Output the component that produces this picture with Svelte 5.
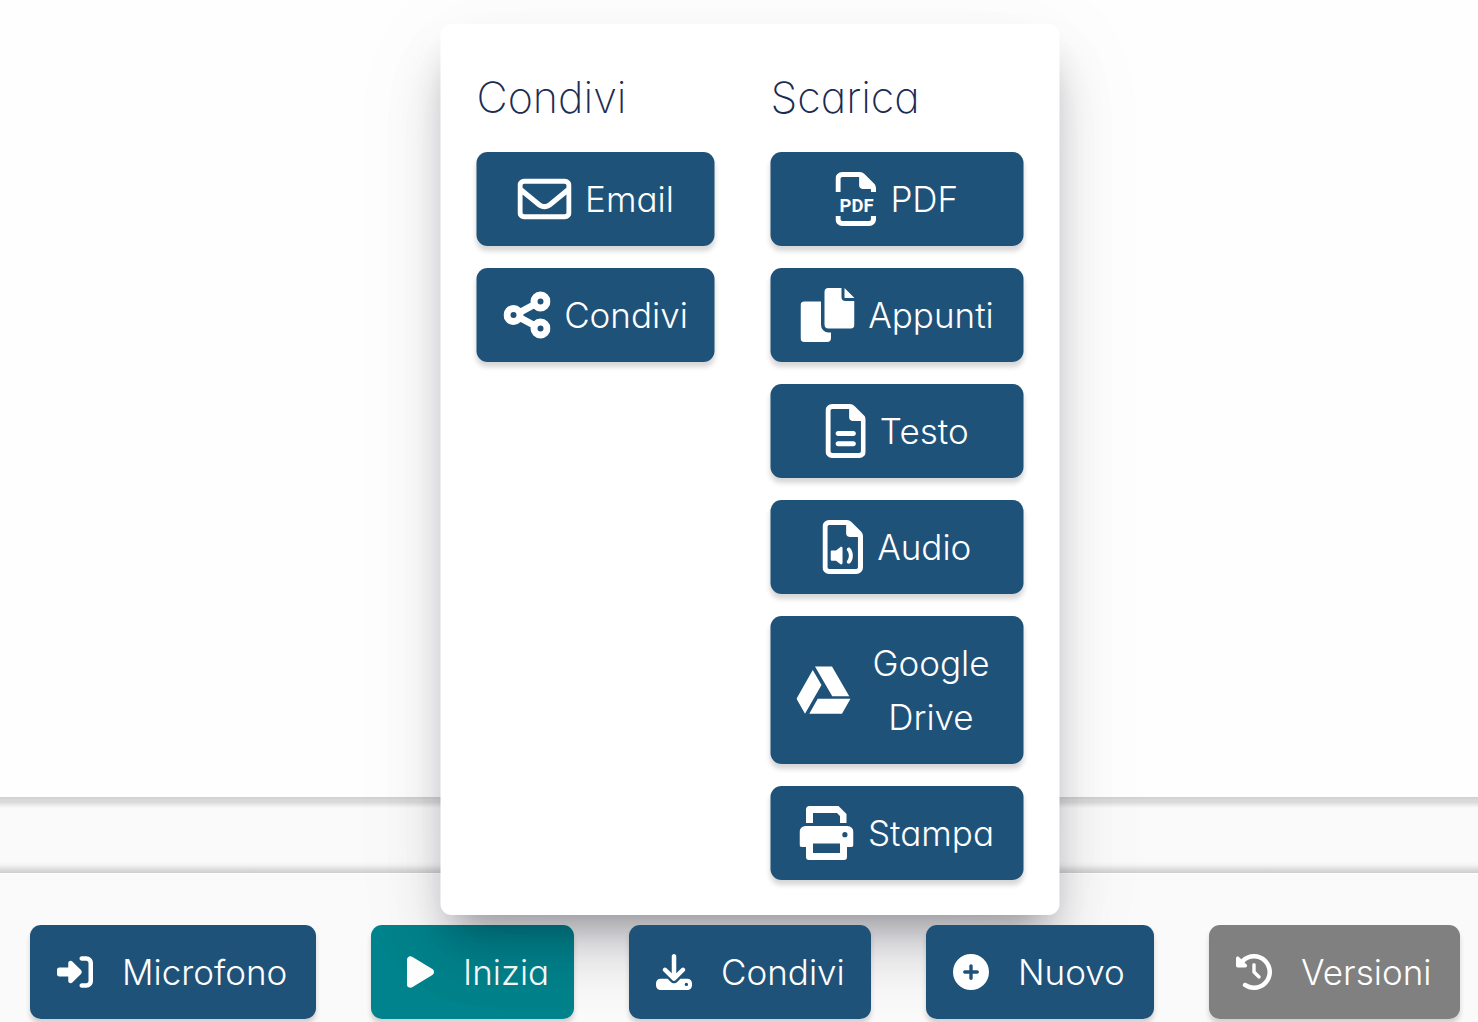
<script>
  const page =
    'M64 464c-8.8 0-16-7.2-16-16V64c0-8.8 7.2-16 16-16H224v80c0 17.7 14.3 32 32 32h80V448c0 8.8-7.2 16-16 16H64zM64 0C28.7 0 0 28.7 0 64V448c0 35.3 28.7 64 64 64H320c35.3 0 64-28.7 64-64V154.5c0-17-6.7-33.3-18.7-45.3L274.7 18.7C262.7 6.7 246.5 0 229.5 0H64z';

  const icons = {
    email: { box: '0 0 512 512', d: 'M64 112c-8.8 0-16 7.2-16 16v22.1L220.5 291.7c20.7 17 50.4 17 71.1 0L464 150.1V128c0-8.8-7.2-16-16-16H64zM48 212.2V384c0 8.8 7.2 16 16 16H448c8.8 0 16-7.2 16-16V212.2L322 328.8c-38.4 31.5-93.7 31.5-132 0L48 212.2zM0 128C0 92.7 28.7 64 64 64H448c35.3 0 64 28.7 64 64V384c0 35.3-28.7 64-64 64H64c-35.3 0-64-28.7-64-64V128z' },
    share: { box: '0 0 47 54', stroke: 'M17 24L30 17M17 30L30 37M16.500 27a6.500 6.500 0 1 1-13 0a6.500 6.500 0 1 1 13 0zM43.500 13.500a6.500 6.500 0 1 1-13 0a6.500 6.500 0 1 1 13 0zM43.500 40.500a6.500 6.500 0 1 1-13 0a6.500 6.500 0 1 1 13 0z' },
    pdf: { box: '0 0 384 512', label: 'PDF', d: 'M64 0C28.700 0 0 28.700 0 64V190H48V64c0-8.800 7.200-16 16-16H224v80c0 17.700 14.300 32 32 32h80v30h48V154.500c0-17-6.700-33.300-18.700-45.300L274.700 18.700C262.700 6.700 246.500 0 229.500 0H64zM0 416v32c0 35.300 28.700 64 64 64H320c35.300 0 64-28.700 64-64v-32h-48v32c0 8.800-7.200 16-16 16H64c-8.800 0-16-7.200-16-16v-32z' },
    copy: { box: '0 0 54 54', d: 'M28 0H41V9a4 4 0 0 0 4 4H54V36.500a4 4 0 0 1-4 4H28a4 4 0 0 1-4-4V4a4 4 0 0 1 4-4zM44 0L54 10H44zM4 13.500H20.500V37a7.500 7.500 0 0 0 7.500 7.500H30.500V50a4 4 0 0 1-4 4H4a4 4 0 0 1-4-4V17.500a4 4 0 0 1 4-4z' },
    text: { box: '0 0 384 512', d: page + 'M120 256c-13.300 0-24 10.700-24 24s10.700 24 24 24H264c13.300 0 24-10.700 24-24s-10.700-24-24-24H120zm0 96c-13.300 0-24 10.700-24 24s10.700 24 24 24H264c13.300 0 24-10.700 24-24s-10.700-24-24-24H120z' },
    audio: { box: '0 0 384 512', d: page + 'M90 290h38l40-32c9-7 22-2 22 10v140c0 12-13 17-22 10l-40-32H90c-7 0-12-5-12-12v-72c0-7 5-12 12-12zM234 268c7-9 19-10 27-3c36 35 36 111 0 146c-8 7-20 6-27-3c-6-8-5-18 1-24c20-22 20-70 0-92c-6-6-7-16-1-24z' },
    drive: { box: '0 0 512 512', d: 'M339 314.9L175.4 32h161.2l163.6 282.9H339zm-137.5 23.6L120.9 480h310.5L512 338.5H201.5zM154.100 67.400L0 338.500 80.600 480 237 208.800 154.100 67.400z' },
    print: { box: '0 0 54 54', d: 'M10 0H39L47 8V17H40.500V10L37.500 7H13.500V17H6.500V3.500A3.500 3.500 0 0 1 10 0zM6 20H48a6 6 0 0 1 6 6V38.500a2.500 2.500 0 0 1-2.500 2.500H47.500V51a3 3 0 0 1-3 3H9.500a3 3 0 0 1-3-3V41H2.500A2.500 2.500 0 0 1 0 38.500V26a6 6 0 0 1 6-6zM13.500 37.500V47H40.500V37.500zM48 28.700a2.600 2.600 0 1 0-5.200 0a2.600 2.600 0 1 0 5.200 0z' },
    enter: { box: '0 0 512 512', d: 'M217.9 105.9L340.7 228.7c7.2 7.2 11.3 17.1 11.3 27.3s-4.1 20.1-11.3 27.3L217.9 406.1c-6.4 6.4-15 9.9-24 9.9c-18.7 0-33.9-15.2-33.9-33.9l0-62.1L32 320c-17.7 0-32-14.3-32-32l0-64c0-17.7 14.3-32 32-32l128 0 0-62.1c0-18.7 15.2-33.9 33.9-33.9c9 0 17.6 3.6 24 9.9zM352 416l64 0c17.7 0 32-14.3 32-32l0-256c0-17.7-14.3-32-32-32l-64 0c-17.7 0-32-14.3-32-32s14.3-32 32-32l64 0c53 0 96 43 96 96l0 256c0 53-43 96-96 96l-64 0c-17.7 0-32-14.3-32-32s14.3-32 32-32z' },
    play: { box: '-128 0 512 512', d: 'M73 39c-14.8-9.1-33.4-9.4-48.5-.9S0 62.6 0 80V432c0 17.4 9.4 33.4 24.5 41.9s33.7 8.1 48.500-.9L361 297c14.300-8.700 23-24.200 23-41s-8.700-32.200-23-41L73 39z' },
    download: { box: '0 0 512 512', d: 'M288 32c0-17.7-14.3-32-32-32s-32 14.3-32 32V274.7l-73.4-73.4c-12.5-12.5-32.8-12.5-45.3 0s-12.5 32.8 0 45.3l128 128c12.5 12.5 32.8 12.5 45.3 0l128-128c12.5-12.5 12.5-32.8 0-45.3s-32.8-12.5-45.3 0L288 274.7V32zM64 352c-35.3 0-64 28.700-64 64v32c0 35.300 28.700 64 64 64H448c35.300 0 64-28.700 64-64V416c0-35.300-28.700-64-64-64H346.500l-45.300 45.300c-25 25-65.500 25-90.500 0L165.500 352H64zm368 56a24 24 0 1 1 0 48 24 24 0 1 1 0-48z' },
    plus: { box: '0 0 512 512', d: 'M256 512A256 256 0 1 0 256 0a256 256 0 1 0 0 512zM232 344V280H168c-13.300 0-24-10.700-24-24s10.700-24 24-24h64V168c0-13.300 10.700-24 24-24s24 10.700 24 24v64h64c13.300 0 24 10.700 24 24s-10.700 24-24 24H280v64c0 13.300-10.700 24-24 24s-24-10.700-24-24z' },
    history: { box: '0 0 512 512', d: 'M75 75L41 41C25.9 25.9 0 36.6 0 57.9V168c0 13.3 10.7 24 24 24H134.1c21.4 0 32.1-25.9 17-41l-30.8-30.8C155 85.5 203 64 256 64c106 0 192 86 192 192s-86 192-192 192c-40.8 0-78.6-12.700-109.700-34.400c-14.500-10.100-34.400-6.600-44.600 7.900s-6.600 34.400 7.900 44.600C151.200 495 201.700 512 256 512c141.400 0 256-114.600 256-256S397.400 0 256 0C185.300 0 121.300 28.700 75 75zm181 53c-13.300 0-24 10.700-24 24V256c0 6.400 2.500 12.500 7 17l72 72c9.400 9.400 24.600 9.400 33.900 0s9.400-24.600 0-33.900l-65-65V152c0-13.300-10.700-24-24-24z' }
  };

  const groups = [
    { title: 'Condivi', items: [['email', 'Email'], ['share', 'Condivi']] },
    {
      title: 'Scarica',
      items: [
        ['pdf', 'PDF'],
        ['copy', 'Appunti'],
        ['text', 'Testo'],
        ['audio', 'Audio'],
        ['drive', 'Google Drive'],
        ['print', 'Stampa']
      ]
    }
  ];

  let open = $state(true);
</script>

{#snippet icon(name)}
  <svg viewBox={icons[name].box} aria-hidden="true">
    {#if icons[name].d}<path fill-rule="evenodd" d={icons[name].d} />{/if}
    {#if icons[name].stroke}<path class="line" d={icons[name].stroke} />{/if}
    {#if icons[name].label}<text x="200" y="378" text-anchor="middle">{icons[name].label}</text>{/if}
  </svg>
{/snippet}

{#snippet action(name, label, tone)}
  <button type="button" class="btn {tone}" disabled={tone === 'muted'}>
    <span class="glyph">{@render icon(name)}</span>
    <span>{label}</span>
  </button>
{/snippet}

<div class="app">
  <main class="editor"></main>
  <div class="strip"></div>
  <footer class="bar">
    {@render action('enter', 'Microfono', '')}
    {@render action('play', 'Inizia', 'start')}
    <div class="anchor">
      <button type="button" class="btn" aria-expanded={open} onclick={() => (open = !open)}>
        <span class="glyph">{@render icon('download')}</span>
        <span>Condivi</span>
      </button>
      {#if open}
        <div class="panel">
          {#each groups as group}
            <section>
              <h2>{group.title}</h2>
              {#each group.items as [name, label]}
                <button type="button" class="btn option">
                  {@render icon(name)}
                  <span>{label}</span>
                </button>
              {/each}
            </section>
          {/each}
        </div>
      {/if}
    </div>
    {@render action('plus', 'Nuovo', '')}
    {@render action('history', 'Versioni', 'muted')}
  </footer>
</div>

<style>
  :global(body) {
    background: #fafafa;
    overflow: hidden;
  }
  .app {
    display: flex;
    flex-direction: column;
    min-height: 100vh;
    font-family: Inter, Lato, sans-serif;
    font-feature-settings: 'cv11';
    font-weight: 300;
    font-size: 35px;
    line-height: 54px;
  }
  .editor {
    flex: 1;
    background: #fefefe;
  }
  .strip {
    height: 76px;
    background:
      linear-gradient(#cfcfcf, #dadada 3px, #dadada 5px, #fafafa 11px, transparent 12px),
      linear-gradient(to top, #cdcdcd, #dadada 3px, #f4f4f4 8px, #fafafa 12px);
  }
  .bar {
    display: grid;
    grid-template-columns: 286fr 203fr 242fr 228fr 251fr;
    gap: 55px;
    padding: 51px 18px 3px 30px;
    border-top: 1px solid #fff;
    background: #fafafa;
  }
  .btn {
    display: flex;
    align-items: center;
    gap: 25px;
    width: 100%;
    margin: 0;
    padding: 20px 22px;
    border: 0;
    border-radius: 11px;
    background: #1f5279;
    box-shadow: 0 5px 5px rgba(0, 0, 0, 0.16);
    color: #fff;
    font: inherit;
    font-feature-settings: inherit;
    white-space: nowrap;
    cursor: pointer;
  }
  .start {
    background: #00838c;
  }
  .muted {
    background: #808080;
    cursor: default;
  }
  .glyph {
    display: flex;
    flex: none;
    justify-content: center;
    width: 45px;
  }
  svg {
    display: block;
    flex: none;
    height: 36px;
    fill: currentColor;
  }
  svg text {
    font: bold 175px Roboto, sans-serif;
  }
  .line {
    fill: none;
    stroke: currentColor;
    stroke-width: 7;
  }
  .anchor {
    position: relative;
  }
  /* Keeps these buttons above the soft shadow of the open panel */
  .anchor > .btn,
  .anchor ~ .btn {
    position: relative;
    z-index: 1;
  }
  .panel {
    position: absolute;
    bottom: calc(100% + 10px);
    left: 50%;
    transform: translateX(-50%);
    display: grid;
    grid-template-columns: 238px 253px;
    gap: 56px;
    padding: 36px 36px 35px;
    border-radius: 11px;
    background: #fff;
    box-shadow:
      0 24px 34px -16px rgba(10, 10, 20, 0.3),
      0 20px 104px 18px rgba(10, 10, 40, 0.03),
      0 40px 60px -4px rgba(10, 10, 40, 0.16);
  }
  section {
    display: flex;
    flex-direction: column;
    gap: 22px;
  }
  h2 {
    margin: 0;
    padding: 10px 0 6px;
    color: #1c2b52;
    font-size: 43px;
    font-weight: 200;
    line-height: 54px;
  }
  .option {
    justify-content: center;
    gap: 14px;
    padding: 20px 26px;
    white-space: normal;
  }
  .option svg {
    height: 54px;
  }
</style>
